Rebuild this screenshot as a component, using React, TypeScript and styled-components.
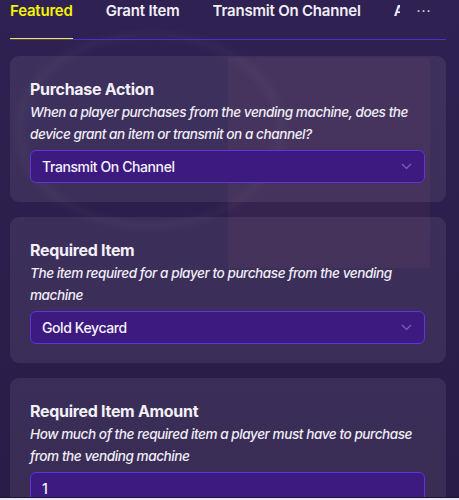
import React from "react";
import styled, { createGlobalStyle } from "styled-components";

const GlobalStyle = createGlobalStyle`
  html, body {
    margin: 0;
    padding: 0;
    background: #2c1e4c;
  }
  body {
    font-family: Inter, "Noto Sans", "Liberation Sans", sans-serif;
    color: #ffffff;
  }
  * { box-sizing: border-box; }
`;

const Page = styled.div`
  width: 459px;
  height: 500px;
  overflow: hidden;
  display: flex;
  flex-direction: column;
  background: #2c1e4c;
`;

const Content = styled.div`
  flex: 1;
  overflow: hidden;
  padding: 0 13px 0 10px;
  background:
    radial-gradient(ellipse 150px 110px at 150px 130px, rgba(255,255,255,0) 80%, rgba(255,255,255,0.022) 87%, rgba(255,255,255,0) 94%),
    linear-gradient(rgba(140, 70, 100, 0.1), rgba(140, 70, 100, 0.1)) 228px 58px / 202px 210px no-repeat,
    linear-gradient(180deg, #2f2152 0%, #2d1f4d 40%, #2a1c48 100%);
  display: flex;
  flex-direction: column;
`;

const BottomEdge = styled.div`
  height: 3px;
  flex-shrink: 0;
  background: #ebeaef;
  border-top: 1px solid #1e1238;
`;

const TabBar = styled.div`
  display: flex;
  align-items: stretch;
  height: 40px;
  border-bottom: 1px solid #4e30c4;
  flex-shrink: 0;
`;

const TabStrip = styled.div`
  display: flex;
  gap: 33px;
  width: 390px;
  overflow: hidden;
  white-space: nowrap;
`;

const Tab = styled.div<{ $active?: boolean; $clipped?: boolean }>`
  font-size: 15px;
  font-weight: 600;
  line-height: 22px;
  color: ${(p) => (p.$active ? "#f4f400" : "#f1eef8")};
  border-bottom: 3px solid ${(p) => (p.$active ? "#f4f400" : "transparent")};
  margin-bottom: -2px;
  letter-spacing: -0.2px;
  flex-shrink: ${(p) => (p.$clipped ? 1 : 0)};
  min-width: 0;
  overflow: hidden;
  text-overflow: clip;
`;

const More = styled.div`
  flex: 1;
  display: flex;
  justify-content: center;
  font-size: 14px;
  line-height: 22px;
  color: #e8e4f2;
  letter-spacing: 1px;
  padding-left: 4px;
  padding-right: 2px;
`;

const CardList = styled.div`
  display: flex;
  flex-direction: column;
  gap: 15px;
  padding-top: 16px;
`;

const Card = styled.section`
  background: rgba(255, 255, 255, 0.075);
  border-radius: 9px;
  padding: 21px 21px 19px 20px;
  display: flex;
  flex-direction: column;
`;

const Title = styled.h3`
  margin: 0;
  font-size: 16px;
  font-weight: 700;
  line-height: 24px;
  color: #f3f0f8;
  letter-spacing: -0.3px;
`;

const Desc = styled.p`
  margin: 0 0 5px;
  font-size: 13.6px;
  font-style: italic;
  font-weight: 500;
  line-height: 22px;
  color: #f0edf6;
  letter-spacing: -0.45px;
`;

const Select = styled.div`
  height: 33px;
  background: #3d1a80;
  border: 1px solid #6234d6;
  border-radius: 6px;
  padding: 0 12px 0 11px;
  display: flex;
  align-items: center;
  justify-content: space-between;
  font-size: 14px;
  font-weight: 500;
  color: #f4f2fa;
  letter-spacing: -0.4px;
`;

const Chevron = () => (
  <svg width="11" height="7" viewBox="0 0 11 7" fill="none">
    <path d="M1 1l4.5 4.5L10 1" stroke="#7a62b8" strokeWidth="1.2" />
  </svg>
);

const fields = [
  {
    title: "Purchase Action",
    desc: "When a player purchases from the vending machine, does the device grant an item or transmit on a channel?",
    value: "Transmit On Channel",
    select: true,
  },
  {
    title: "Required Item",
    desc: "The item required for a player to purchase from the vending machine",
    value: "Gold Keycard",
    select: true,
  },
  {
    title: "Required Item Amount",
    desc: "How much of the required item a player must have to purchase from the vending machine",
    value: "1",
    select: false,
  },
];

export default function App() {
  return (
    <>
      <GlobalStyle />
      <Page>
        <Content>
          <TabBar>
            <TabStrip>
              <Tab $active>Featured</Tab>
              <Tab>Grant Item</Tab>
              <Tab>Transmit On Channel</Tab>
              <Tab $clipped>Advanced</Tab>
            </TabStrip>
            <More>···</More>
          </TabBar>
          <CardList>
            {fields.map((f) => (
              <Card key={f.title}>
                <Title>{f.title}</Title>
                <Desc>{f.desc}</Desc>
                <Select>
                  <span>{f.value}</span>
                  {f.select && <Chevron />}
                </Select>
              </Card>
            ))}
          </CardList>
        </Content>
        <BottomEdge />
      </Page>
    </>
  );
}
